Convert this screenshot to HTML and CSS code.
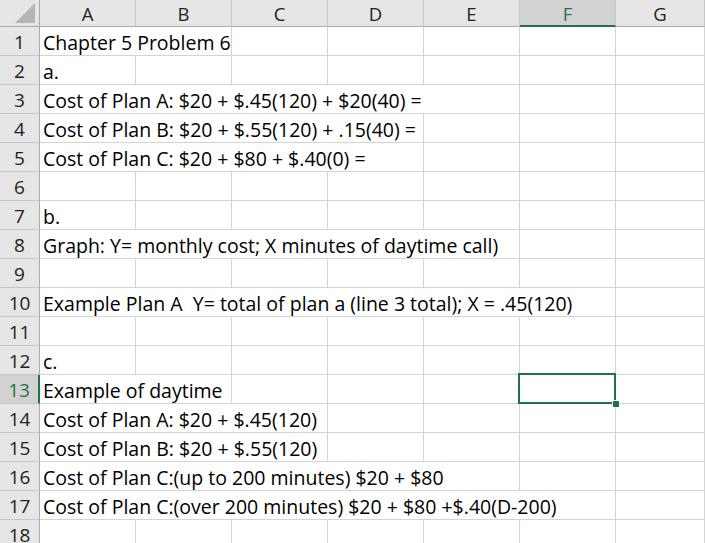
FILE: index.html
```html
<!DOCTYPE html>
<html>
<head>
<meta charset="utf-8">
<link rel="stylesheet" href="styles.css">
</head>
<body>
<div class="sheet">
  <div class="hd corner"><span class="tri"></span></div>
  <div class="hd col">A</div>
  <div class="hd col">B</div>
  <div class="hd col">C</div>
  <div class="hd col">D</div>
  <div class="hd col">E</div>
  <div class="hd col sel-col">F</div>
  <div class="hd col">G</div>

  <div class="hd row">1</div>
  <div class="c t s2">Chapter 5 Problem 6</div><div class="c"></div><div class="c"></div><div class="c"></div><div class="c"></div><div class="c"></div>

  <div class="hd row">2</div>
  <div class="c t">a.</div><div class="c"></div><div class="c"></div><div class="c"></div><div class="c"></div><div class="c"></div><div class="c"></div>

  <div class="hd row">3</div>
  <div class="c t s5">Cost of Plan A: $20 + $.45(120) + $20(40) =</div><div class="c"></div><div class="c"></div>

  <div class="hd row">4</div>
  <div class="c t s4">Cost of Plan B: $20 + $.55(120) + .15(40) =</div><div class="c"></div><div class="c"></div><div class="c"></div>

  <div class="hd row">5</div>
  <div class="c t s4">Cost of Plan C: $20 + $80 + $.40(0) =</div><div class="c"></div><div class="c"></div><div class="c"></div>

  <div class="hd row">6</div>
  <div class="c"></div><div class="c"></div><div class="c"></div><div class="c"></div><div class="c"></div><div class="c"></div><div class="c"></div>

  <div class="hd row">7</div>
  <div class="c t">b.</div><div class="c"></div><div class="c"></div><div class="c"></div><div class="c"></div><div class="c"></div><div class="c"></div>

  <div class="hd row">8</div>
  <div class="c t s5">Graph: Y= monthly cost; X minutes of daytime call)</div><div class="c"></div><div class="c"></div>

  <div class="hd row">9</div>
  <div class="c"></div><div class="c"></div><div class="c"></div><div class="c"></div><div class="c"></div><div class="c"></div><div class="c"></div>

  <div class="hd row">10</div>
  <div class="c t s6">Example Plan A&nbsp; Y= total of plan a (line 3 total); X = .45(120)</div><div class="c"></div>

  <div class="hd row">11</div>
  <div class="c"></div><div class="c"></div><div class="c"></div><div class="c"></div><div class="c"></div><div class="c"></div><div class="c"></div>

  <div class="hd row">12</div>
  <div class="c t">c.</div><div class="c"></div><div class="c"></div><div class="c"></div><div class="c"></div><div class="c"></div><div class="c"></div>

  <div class="hd row sel-row">13</div>
  <div class="c t s2">Example of daytime</div><div class="c"></div><div class="c"></div><div class="c"></div><div class="c active"></div><div class="c"></div>

  <div class="hd row">14</div>
  <div class="c t s3">Cost of Plan A: $20 + $.45(120)</div><div class="c"></div><div class="c"></div><div class="c"></div><div class="c"></div>

  <div class="hd row">15</div>
  <div class="c t s3">Cost of Plan B: $20 + $.55(120)</div><div class="c"></div><div class="c"></div><div class="c"></div><div class="c"></div>

  <div class="hd row">16</div>
  <div class="c t s5">Cost of Plan C:(up to 200 minutes) $20 + $80</div><div class="c"></div><div class="c"></div>

  <div class="hd row">17</div>
  <div class="c t s6">Cost of Plan C:(over 200 minutes) $20 + $80 +$.40(D-200)</div><div class="c"></div>

  <div class="hd row">18</div>
  <div class="c"></div><div class="c"></div><div class="c"></div><div class="c"></div><div class="c"></div><div class="c"></div><div class="c"></div>
</div>
</body>
</html>
```

FILE: styles.css
```css
html, body {
  margin: 0;
  padding: 0;
  background: #ffffff;
  overflow: hidden;
}

.sheet {
  display: grid;
  grid-template-columns: 40px repeat(6, 96px) 1fr;
  grid-template-rows: 27px;
  grid-auto-rows: 29px;
  width: 100%;
}

.hd {
  background: #e6e6e6;
  box-sizing: border-box;
  border-right: 1px solid #c6c6c6;
  border-bottom: 1px solid #c6c6c6;
  font-family: "Open Sans", "Noto Sans", sans-serif;
  color: #222222;
  display: flex;
  justify-content: center;
}

.col {
  border-bottom-color: #ababab;
  font-size: 18.5px;
  align-items: center;
}

.row {
  border-right-color: #ababab;
  border-bottom-color: #c6c6c6;
  font-size: 19px;
  line-height: 26px;
  padding-top: 2px;
}

.corner {
  position: relative;
  border-bottom-color: #ababab;
  border-right-color: #ababab;
}

.tri {
  position: absolute;
  right: 4px;
  bottom: 3px;
  width: 0;
  height: 0;
  border-left: 20px solid transparent;
  border-bottom: 20px solid #b5b5b5;
}

.sel-col {
  background: #d2d2d2;
  color: #217346;
  border-bottom: 2px solid #217346;
  padding-top: 1px;
}

.sel-row {
  background: #d2d2d2;
  color: #217346;
  border-right: 2px solid #217346;
}

.c {
  box-sizing: border-box;
  border-right: 1px solid #d4d4d4;
  border-bottom: 1px solid #d4d4d4;
  background: #ffffff;
}

.t {
  font-family: "Open Sans", "Noto Sans", sans-serif;
  font-size: 19.5px;
  color: #000000;
  white-space: nowrap;
  padding-left: 3px;
  padding-top: 3px;
  line-height: 25px;
  overflow: hidden;
}

.s2 { grid-column: span 2; }
.s3 { grid-column: span 3; }
.s4 { grid-column: span 4; }
.s5 { grid-column: span 5; }
.s6 { grid-column: span 6; }

.active {
  position: relative;
}

.active::before {
  content: "";
  position: absolute;
  left: -2px;
  top: -2px;
  right: -1px;
  bottom: -1px;
  border: 2px solid #217346;
}

.active::after {
  content: "";
  position: absolute;
  right: -4px;
  bottom: -4px;
  width: 6px;
  height: 6px;
  background: #217346;
  border-left: 1px solid #ffffff;
  border-top: 1px solid #ffffff;
}
```
